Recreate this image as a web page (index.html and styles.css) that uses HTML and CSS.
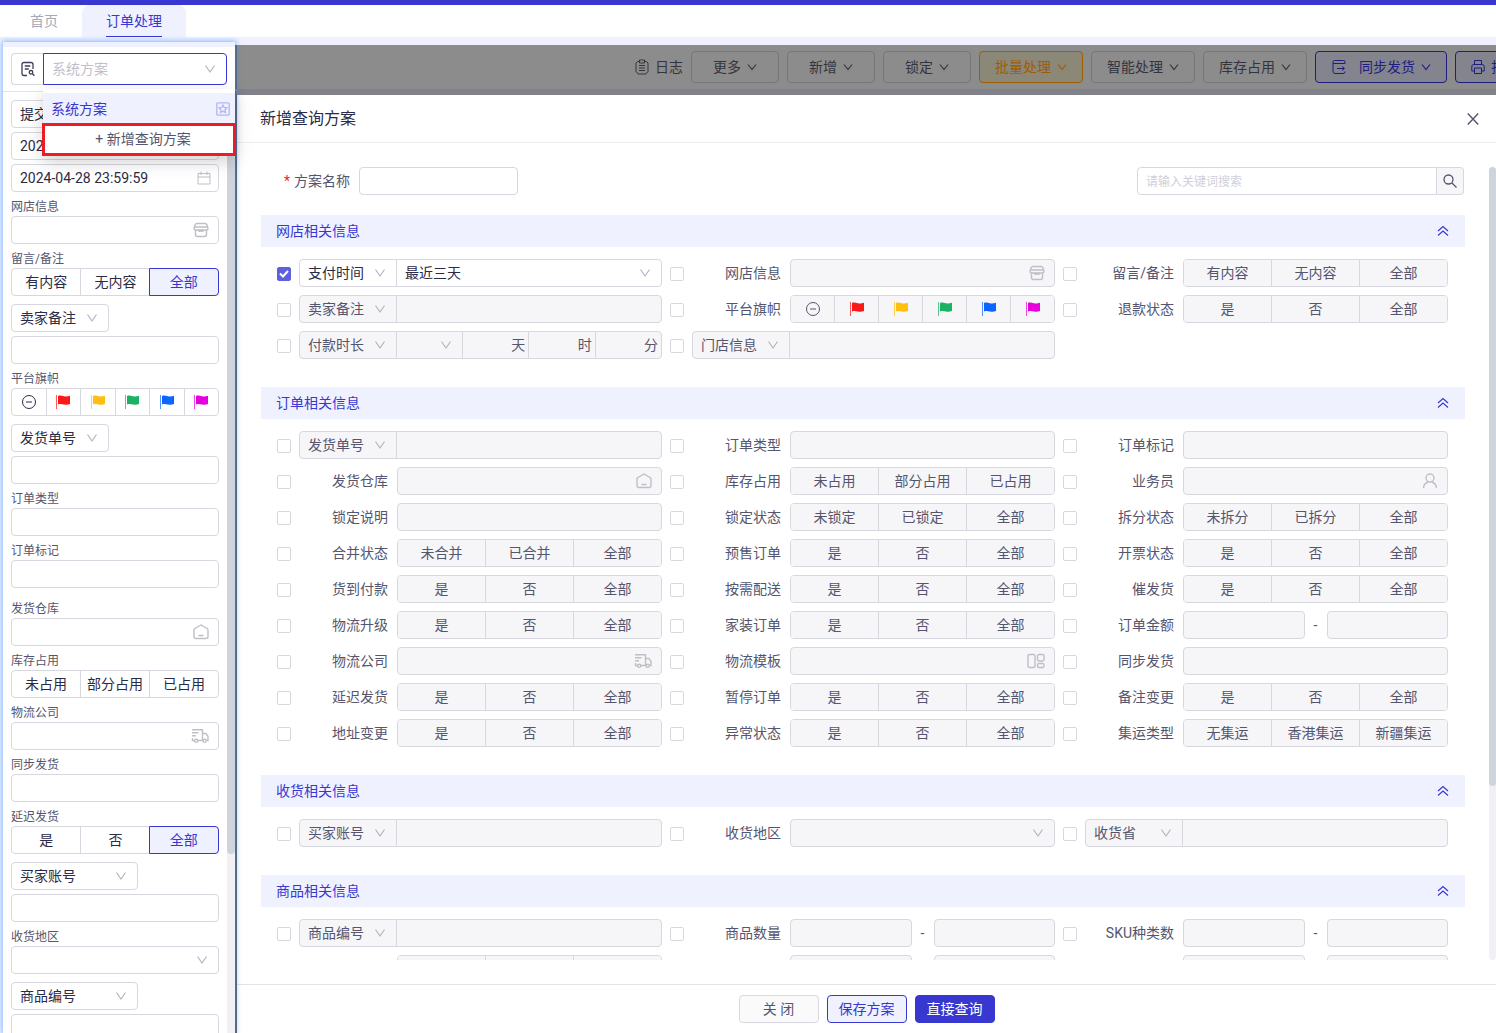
FILE: index.html
```html
<!DOCTYPE html>
<html lang="zh-CN">
<head>
<meta charset="utf-8">
<meta name="viewport" content="width=device-width, initial-scale=1">
<title>订单处理</title>
<link rel="stylesheet" href="styles.css">
</head>
<body>
<svg class="sprite" aria-hidden="true">
  <symbol id="i-down" viewBox="0 0 10 10"><path d="M1 2.5l4 5 4-5"/></symbol>
  <symbol id="i-up2" viewBox="0 0 12 12"><path d="M1 6l5-4.500 5 4.500M1 10.500L6 6l5 4.500"/></symbol>
  <symbol id="i-shop" viewBox="0 0 16 16"><path d="M4 1.500h8q1.500 0 2 1.500l1 3.500q0 1.500-1.500 1.500h-11Q1 8 1 6.500L2 3q.5-1.500 2-1.500zM2.500 8v4.500q0 2 2 2h7q2 0 2-2V8M1.800 5h12.400M5.500 8.500q1 1.500 2.500 0 1.500 1.500 2.500 0"/></symbol>
  <symbol id="i-house" viewBox="0 0 16 16"><path d="M1 6q0-1 1-1.500L8 1l6 3.500q1 .5 1 1.500v6.500q0 2-2 2H3q-2 0-2-2zM5.500 11.500h5"/></symbol>
  <symbol id="i-truck" viewBox="0 0 18 16"><path d="M1 1.700h10.500v10.800M1 4.700h6.500M1 7.700h4M1.500 10v2.500h2M7 12.500h5M11.500 5.500h3.300L17 8.300v4.200h-1.500"/><circle cx="5.200" cy="12.800" r="1.600"/><circle cx="13.700" cy="12.800" r="1.600"/></symbol>
  <symbol id="i-user" viewBox="0 0 16 16"><circle cx="8" cy="5" r="4"/><path d="M1.500 15c.3-3.500 2.500-5.500 5-6M14.500 15c-.3-3.500-2.500-5.500-5-6"/></symbol>
  <symbol id="i-grid" viewBox="0 0 18 16"><rect x="1" y="1.500" width="7" height="13" rx="1.500"/><rect x="10.500" y="1.500" width="6.500" height="6.500" rx="1.500"/><rect x="10.500" y="10.500" width="6.500" height="4" rx="1.500"/></symbol>
  <symbol id="i-date" viewBox="0 0 14 14"><path d="M1 2.500h12v10.500H1zM1 6h12M4 .5v3.500M10 .5v3.500"/></symbol>
  <symbol id="i-none" viewBox="0 0 16 16"><circle cx="8" cy="8" r="6.500"/><path d="M5 8h6"/></symbol>
  <symbol id="i-flag" viewBox="0 0 16 16"><path class="pole" d="M1.500 1v14"/><path class="cloth" d="M3 2c2-1 4 0 6 .3 2 .4 4 .2 6-.6v8.300c-2 .8-4 .9-6 .4-2-.4-4-.9-6 0z"/></symbol>
  <symbol id="i-search" viewBox="0 0 14 14"><circle cx="5.500" cy="5.500" r="4.500"/><path d="M9 9l4.500 4.500"/></symbol>
  <symbol id="i-close" viewBox="0 0 12 12"><path d="M.8.5l10.400 11M11.200.5L.8 11.500"/></symbol>
  <symbol id="i-scheme" viewBox="0 0 16 16"><path d="M7 14.500H4q-2 0-2-2v-9q0-2 2-2h7q2 0 2 2V8M4.800 5h5.500M4.800 8h4"/><circle cx="11" cy="11.300" r="1.800"/><path d="M12.400 12.700l2 2"/></symbol>
  <symbol id="i-log" viewBox="0 0 14 16"><path d="M4.500 2.500H2.500L1 4v8.500L3 15h8l2-2.500V4l-1.500-1.500h-2M4.500 1h5v3h-5zM4 6.500h6M4 9h6M4 11.500h6"/></symbol>
  <symbol id="i-sync" viewBox="0 0 16 16"><path d="M14 4.500V3q0-1.500-1.500-1.500h-9Q2 1.500 2 3v1.500h12M2 4.500v7.500q0 2.500 2 2.500h8q2 0 2-2M6 9.500h7M11 7.500l2.500 2L11 11.500"/></symbol>
  <symbol id="i-print" viewBox="0 0 14 14"><path d="M3.500 4.500v-4h7v4M3 11H.8V6.500q0-2 2-2h8.400q2 0 2 2V11H11M3.500 8h7v5.500h-7z"/></symbol>
  <symbol id="i-star" viewBox="0 0 14 14"><rect x=".8" y=".8" width="12.400" height="12.400" rx="1"/><path d="M7 3l1.200 2.500 2.800.4-2 1.900.5 2.700L7 9.200l-2.500 1.300.5-2.700-2-1.900 2.800-.4z"/></symbol>
</svg>

<header class="topbar">
  <nav class="tabs">
    <a class="tab" href="#home">首页</a>
    <a class="tab active" href="#orders"><span>订单处理</span></a>
  </nav>
</header>

<main class="workspace">
  <aside class="sidebar">
    <div class="scheme-bar">
      <button class="scheme-btn" type="button" aria-label="查询方案"><svg class="ic16"><use href="#i-scheme"/></svg></button>
      <div class="scheme-pick">
        <select class="input select placeholder" aria-label="系统方案"><option>系统方案</option></select>
        <div class="menu">
          <button type="button" class="menu-item">系统方案<svg class="ic14"><use href="#i-star"/></svg></button>
          <button type="button" class="menu-add">+ 新增查询方案</button>
        </div>
      </div>
    </div>
    <div class="side-main">
      <form class="filters">
        <div class="stack">
          <select class="input select" aria-label="时间类型"><option>提交时间</option></select>
          <input class="input" aria-label="开始时间" value="2024-04-26 00:00:00">
          <div class="with-icon"><input class="input" aria-label="结束时间" value="2024-04-28 23:59:59"><svg class="ic14"><use href="#i-date"/></svg></div>
        </div>
        <div class="group">
          <label for="s1">网店信息</label>
          <div class="with-icon"><input class="input" id="s1"><svg class="ic16"><use href="#i-shop"/></svg></div>
        </div>
        <div class="group">
          <label>留言/备注</label>
          <div class="seg"><button type="button">有内容</button><button type="button">无内容</button><button type="button" class="on">全部</button></div>
        </div>
        <div class="stack">
          <select class="input select narrow" aria-label="备注类型"><option>卖家备注</option></select>
          <input class="input" aria-label="卖家备注">
        </div>
        <div class="group">
          <label>平台旗帜</label>
          <div class="seg flags"><button type="button" aria-label="无"><svg class="ic16"><use href="#i-none"/></svg></button><button type="button" aria-label="红"><svg class="flag red"><use href="#i-flag"/></svg></button><button type="button" aria-label="黄"><svg class="flag yellow"><use href="#i-flag"/></svg></button><button type="button" aria-label="绿"><svg class="flag green"><use href="#i-flag"/></svg></button><button type="button" aria-label="蓝"><svg class="flag blue"><use href="#i-flag"/></svg></button><button type="button" aria-label="紫"><svg class="flag pink"><use href="#i-flag"/></svg></button></div>
        </div>
        <div class="stack">
          <select class="input select narrow" aria-label="单号类型"><option>发货单号</option></select>
          <input class="input" aria-label="发货单号">
        </div>
        <div class="group"><label for="s2">订单类型</label><input class="input" id="s2"></div>
        <div class="group"><label for="s3">订单标记</label><input class="input" id="s3"></div>
        <div class="group apart">
          <label for="s4">发货仓库</label>
          <div class="with-icon"><input class="input" id="s4"><svg class="ic16"><use href="#i-house"/></svg></div>
        </div>
        <div class="group">
          <label>库存占用</label>
          <div class="seg"><button type="button">未占用</button><button type="button">部分占用</button><button type="button">已占用</button></div>
        </div>
        <div class="group">
          <label for="s5">物流公司</label>
          <div class="with-icon"><input class="input" id="s5"><svg class="ic18"><use href="#i-truck"/></svg></div>
        </div>
        <div class="group"><label for="s6">同步发货</label><input class="input" id="s6"></div>
        <div class="group">
          <label>延迟发货</label>
          <div class="seg"><button type="button">是</button><button type="button">否</button><button type="button" class="on">全部</button></div>
        </div>
        <div class="stack">
          <select class="input select medium" aria-label="买家类型"><option>买家账号</option></select>
          <input class="input" aria-label="买家账号">
        </div>
        <div class="group"><label for="s7">收货地区</label><select class="input select" id="s7"></select></div>
        <div class="stack">
          <select class="input select medium" aria-label="商品类型"><option>商品编号</option></select>
          <input class="input" aria-label="商品编号">
        </div>
      </form>
      <div class="side-track"><div class="side-thumb"></div></div>
    </div>
  </aside>

  <section class="content">
    <div class="toolbar">
      <button type="button" class="log"><svg class="log-ic"><use href="#i-log"/></svg>日志</button>
      <button type="button" class="tool short">更多<svg class="ic10"><use href="#i-down"/></svg></button>
      <button type="button" class="tool short">新增<svg class="ic10"><use href="#i-down"/></svg></button>
      <button type="button" class="tool short">锁定<svg class="ic10"><use href="#i-down"/></svg></button>
      <button type="button" class="tool warn">批量处理<svg class="ic10"><use href="#i-down"/></svg></button>
      <button type="button" class="tool">智能处理<svg class="ic10"><use href="#i-down"/></svg></button>
      <button type="button" class="tool">库存占用<svg class="ic10"><use href="#i-down"/></svg></button>
      <button type="button" class="tool main"><svg class="ic16 lead"><use href="#i-sync"/></svg>同步发货<svg class="ic10"><use href="#i-down"/></svg></button>
      <button type="button" class="tool main"><svg class="ic14"><use href="#i-print"/></svg>打印<svg class="ic10"><use href="#i-down"/></svg></button>
    </div>

    <div class="drawer">
      <div class="drawer-head">
        <h1>新增查询方案</h1>
        <button type="button" class="close" aria-label="关闭"><svg class="ic12"><use href="#i-close"/></svg></button>
      </div>
      <div class="drawer-body">
        <div class="scroller">
          <div class="name-row">
            <label for="plan"><b>*</b>方案名称</label>
            <input class="input plan" id="plan">
            <div class="search">
              <input class="input" placeholder="请输入关键词搜索" aria-label="搜索">
              <button type="button" aria-label="搜索"><svg class="ic14"><use href="#i-search"/></svg></button>
            </div>
          </div>

          <section class="block">
            <h2>网店相关信息<svg class="ic12"><use href="#i-up2"/></svg></h2>
            <div class="grid">
              <div class="item"><input type="checkbox" aria-label="支付时间" checked><div class="join"><select class="input select" aria-label="时间类型"><option>支付时间</option></select><select class="input select" aria-label="时间范围"><option>最近三天</option></select></div></div>
              <div class="item"><input type="checkbox" id="a2"><label for="a2">网店信息</label><div class="with-icon"><input class="input" aria-label="网店信息" disabled><svg class="ic16"><use href="#i-shop"/></svg></div></div>
              <div class="item"><input type="checkbox" id="a3"><label for="a3">留言/备注</label><div class="seg"><button disabled>有内容</button><button disabled>无内容</button><button disabled>全部</button></div></div>

              <div class="item"><input type="checkbox" aria-label="卖家备注"><div class="join"><select class="input select" aria-label="备注类型" disabled><option>卖家备注</option></select><input class="input" aria-label="备注内容" disabled></div></div>
              <div class="item"><input type="checkbox" id="a5"><label for="a5">平台旗帜</label><div class="seg flags"><button disabled aria-label="无"><svg class="ic16"><use href="#i-none"/></svg></button><button disabled aria-label="红"><svg class="flag red"><use href="#i-flag"/></svg></button><button disabled aria-label="黄"><svg class="flag yellow"><use href="#i-flag"/></svg></button><button disabled aria-label="绿"><svg class="flag green"><use href="#i-flag"/></svg></button><button disabled aria-label="蓝"><svg class="flag blue"><use href="#i-flag"/></svg></button><button disabled aria-label="紫"><svg class="flag pink"><use href="#i-flag"/></svg></button></div></div>
              <div class="item"><input type="checkbox" id="a6"><label for="a6">退款状态</label><div class="seg"><button disabled>是</button><button disabled>否</button><button disabled>全部</button></div></div>

              <div class="item"><input type="checkbox" aria-label="付款时长"><div class="join"><select class="input select" aria-label="时长类型" disabled><option>付款时长</option></select><select class="input select compare" aria-label="比较" disabled></select><span class="unit"><input class="input" aria-label="天" disabled><i>天</i></span><span class="unit"><input class="input" aria-label="时" disabled><i>时</i></span><span class="unit"><input class="input" aria-label="分" disabled><i>分</i></span></div></div>
              <div class="item"><input type="checkbox" aria-label="门店信息"><div class="join"><select class="input select" aria-label="门店类型" disabled><option>门店信息</option></select><input class="input" aria-label="门店内容" disabled></div></div>
            </div>
          </section>

          <section class="block">
            <h2>订单相关信息<svg class="ic12"><use href="#i-up2"/></svg></h2>
            <div class="grid">
              <div class="item"><input type="checkbox" aria-label="发货单号"><div class="join"><select class="input select" aria-label="单号类型" disabled><option>发货单号</option></select><input class="input" aria-label="单号" disabled></div></div>
              <div class="item"><input type="checkbox" id="b2"><label for="b2">订单类型</label><input class="input" aria-label="订单类型" disabled></div>
              <div class="item"><input type="checkbox" id="b3"><label for="b3">订单标记</label><input class="input" aria-label="订单标记" disabled></div>

              <div class="item"><input type="checkbox" id="b4"><label for="b4">发货仓库</label><div class="with-icon"><input class="input" aria-label="发货仓库" disabled><svg class="ic16"><use href="#i-house"/></svg></div></div>
              <div class="item"><input type="checkbox" id="b5"><label for="b5">库存占用</label><div class="seg"><button disabled>未占用</button><button disabled>部分占用</button><button disabled>已占用</button></div></div>
              <div class="item"><input type="checkbox" id="b6"><label for="b6">业务员</label><div class="with-icon"><input class="input" aria-label="业务员" disabled><svg class="ic16"><use href="#i-user"/></svg></div></div>

              <div class="item"><input type="checkbox" id="b7"><label for="b7">锁定说明</label><input class="input" aria-label="锁定说明" disabled></div>
              <div class="item"><input type="checkbox" id="b8"><label for="b8">锁定状态</label><div class="seg"><button disabled>未锁定</button><button disabled>已锁定</button><button disabled>全部</button></div></div>
              <div class="item"><input type="checkbox" id="b9"><label for="b9">拆分状态</label><div class="seg"><button disabled>未拆分</button><button disabled>已拆分</button><button disabled>全部</button></div></div>

              <div class="item"><input type="checkbox" id="b10"><label for="b10">合并状态</label><div class="seg"><button disabled>未合并</button><button disabled>已合并</button><button disabled>全部</button></div></div>
              <div class="item"><input type="checkbox" id="b11"><label for="b11">预售订单</label><div class="seg"><button disabled>是</button><button disabled>否</button><button disabled>全部</button></div></div>
              <div class="item"><input type="checkbox" id="b12"><label for="b12">开票状态</label><div class="seg"><button disabled>是</button><button disabled>否</button><button disabled>全部</button></div></div>

              <div class="item"><input type="checkbox" id="b13"><label for="b13">货到付款</label><div class="seg"><button disabled>是</button><button disabled>否</button><button disabled>全部</button></div></div>
              <div class="item"><input type="checkbox" id="b14"><label for="b14">按需配送</label><div class="seg"><button disabled>是</button><button disabled>否</button><button disabled>全部</button></div></div>
              <div class="item"><input type="checkbox" id="b15"><label for="b15">催发货</label><div class="seg"><button disabled>是</button><button disabled>否</button><button disabled>全部</button></div></div>

              <div class="item"><input type="checkbox" id="b16"><label for="b16">物流升级</label><div class="seg"><button disabled>是</button><button disabled>否</button><button disabled>全部</button></div></div>
              <div class="item"><input type="checkbox" id="b17"><label for="b17">家装订单</label><div class="seg"><button disabled>是</button><button disabled>否</button><button disabled>全部</button></div></div>
              <div class="item"><input type="checkbox" id="b18"><label for="b18">订单金额</label><div class="range"><input class="input" aria-label="最低金额" disabled><span>-</span><input class="input" aria-label="最高金额" disabled></div></div>

              <div class="item"><input type="checkbox" id="b19"><label for="b19">物流公司</label><div class="with-icon"><input class="input" aria-label="物流公司" disabled><svg class="ic18"><use href="#i-truck"/></svg></div></div>
              <div class="item"><input type="checkbox" id="b20"><label for="b20">物流模板</label><div class="with-icon"><input class="input" aria-label="物流模板" disabled><svg class="ic18"><use href="#i-grid"/></svg></div></div>
              <div class="item"><input type="checkbox" id="b21"><label for="b21">同步发货</label><input class="input" aria-label="同步发货" disabled></div>

              <div class="item"><input type="checkbox" id="b22"><label for="b22">延迟发货</label><div class="seg"><button disabled>是</button><button disabled>否</button><button disabled>全部</button></div></div>
              <div class="item"><input type="checkbox" id="b23"><label for="b23">暂停订单</label><div class="seg"><button disabled>是</button><button disabled>否</button><button disabled>全部</button></div></div>
              <div class="item"><input type="checkbox" id="b24"><label for="b24">备注变更</label><div class="seg"><button disabled>是</button><button disabled>否</button><button disabled>全部</button></div></div>

              <div class="item"><input type="checkbox" id="b25"><label for="b25">地址变更</label><div class="seg"><button disabled>是</button><button disabled>否</button><button disabled>全部</button></div></div>
              <div class="item"><input type="checkbox" id="b26"><label for="b26">异常状态</label><div class="seg"><button disabled>是</button><button disabled>否</button><button disabled>全部</button></div></div>
              <div class="item"><input type="checkbox" id="b27"><label for="b27">集运类型</label><div class="seg"><button disabled>无集运</button><button disabled>香港集运</button><button disabled>新疆集运</button></div></div>
            </div>
          </section>

          <section class="block">
            <h2>收货相关信息<svg class="ic12"><use href="#i-up2"/></svg></h2>
            <div class="grid">
              <div class="item"><input type="checkbox" aria-label="买家账号"><div class="join"><select class="input select" aria-label="买家类型" disabled><option>买家账号</option></select><input class="input" aria-label="买家" disabled></div></div>
              <div class="item"><input type="checkbox" id="c2"><label for="c2">收货地区</label><select class="input select" aria-label="收货地区" disabled></select></div>
              <div class="item"><input type="checkbox" aria-label="收货省"><div class="join"><select class="input select" aria-label="地址类型" disabled><option>收货省</option></select><input class="input" aria-label="地址" disabled></div></div>
            </div>
          </section>

          <section class="block">
            <h2>商品相关信息<svg class="ic12"><use href="#i-up2"/></svg></h2>
            <div class="grid">
              <div class="item"><input type="checkbox" aria-label="商品编号"><div class="join"><select class="input select" aria-label="商品类型" disabled><option>商品编号</option></select><input class="input" aria-label="编号" disabled></div></div>
              <div class="item"><input type="checkbox" id="d2"><label for="d2">商品数量</label><div class="range"><input class="input" aria-label="最少数量" disabled><span>-</span><input class="input" aria-label="最多数量" disabled></div></div>
              <div class="item"><input type="checkbox" id="d3"><label for="d3">SKU种类数</label><div class="range"><input class="input" aria-label="最少种类" disabled><span>-</span><input class="input" aria-label="最多种类" disabled></div></div>

              <div class="item"><input type="checkbox" id="d4"><label for="d4"></label><div class="seg"><button disabled></button><button disabled></button><button disabled></button></div></div>
              <div class="item"><input type="checkbox" id="d5"><label for="d5"></label><div class="range"><input class="input" aria-label="下限" disabled><span></span><input class="input" aria-label="上限" disabled></div></div>
              <div class="item"><input type="checkbox" id="d6"><label for="d6"></label><div class="range"><input class="input" aria-label="下限" disabled><span></span><input class="input" aria-label="上限" disabled></div></div>
            </div>
          </section>
        </div>
        <div class="track"><div class="thumb"></div></div>
      </div>
      <footer class="drawer-foot">
        <button type="button" class="btn ghost">关 闭</button>
        <button type="button" class="btn outline">保存方案</button>
        <button type="button" class="btn solid">直接查询</button>
      </footer>
    </div>
  </section>
</main>
</body>
</html>
```

FILE: styles.css
```css
:root {
  --primary: #3838d1;
  --tint: #eff1ff;
  --line: #d7d7e0;
  --text: #2b2b45;
  --muted: #55556e;
  --off: #f6f6f9;
}
* { box-sizing: border-box; }
body {
  margin: 0;
  height: 100vh;
  display: flex;
  flex-direction: column;
  overflow: hidden;
  background: var(--tint);
  color: var(--text);
  font: 14px/20px Roboto, "Noto Sans CJK SC", sans-serif;
}
button, input, select { font: inherit; color: inherit; margin: 0; }
button { background: none; border: 0; padding: 0; cursor: pointer; }
h1, h2 { margin: 0; font-weight: 400; }
.sprite { position: absolute; width: 0; height: 0; }
svg { fill: none; stroke: currentColor; flex: none; display: block; }
.ic10 { width: 10px; height: 10px; }
.ic12 { width: 12px; height: 12px; }
.ic14 { width: 14px; height: 14px; }
.ic16 { width: 16px; height: 16px; }
.ic18 { width: 18px; height: 16px; }

/* header */
.topbar { border-top: 5px solid var(--primary); background: #fff; flex: none; }
.tabs { display: flex; height: 32px; padding-left: 6px; }
.tab { padding: 0 24px; line-height: 32px; color: #a5a9b8; text-decoration: none; }
.tab.active { background: var(--tint); color: var(--primary); border-radius: 8px 8px 0 0; }
.tab.active span { display: block; border-bottom: 1px solid var(--primary); height: 32px; }

.workspace { flex: 1; min-height: 0; display: flex; padding: 5px 0 0 3px; }

/* sidebar */
.sidebar {
  position: relative;
  z-index: 2;
  flex: none;
  width: 232px;
  display: flex;
  flex-direction: column;
  background: #fff;
  border-top: 5px solid var(--tint);
  box-shadow: 0 0 5px 1px rgba(60, 145, 255, .6);
}
.scheme-bar { display: flex; padding: 6px 8px; border-bottom: 1px solid #e4e4ea; flex: none; }
.scheme-btn {
  display: flex;
  align-items: center;
  justify-content: center;
  width: 32px;
  height: 32px;
  border: 1px solid var(--line);
  border-right: 0;
  border-radius: 4px 0 0 4px;
  color: #3f3f58;
}
.scheme-btn svg { stroke-width: 1.3; }
.scheme-pick { position: relative; flex: 1; }
.scheme-pick .input { height: 32px; border-color: var(--primary); border-radius: 0 4px 4px 0; }
.placeholder { color: #bfbfc8; }
.menu {
  position: absolute;
  z-index: 3;
  top: 36px;
  left: 0;
  width: 192px;
  padding-top: 4px;
  background: #fff;
  box-shadow: 0 6px 16px rgba(0, 0, 0, .18);
}
.menu-item {
  display: flex;
  width: 100%;
  height: 32px;
  padding: 0 5px 0 8px;
  align-items: center;
  justify-content: space-between;
  background: var(--tint);
  color: var(--primary);
}
.menu-item svg { color: #b4b6f2; stroke-width: 1.3; }
.menu-add {
  display: block;
  width: 194px;
  height: 33px;
  margin: -2px -1px 0;
  padding: 0 0 2px 8px;
  border: 3px solid #ed1c24;
  background: #fff;
  color: var(--muted);
}
.side-main { flex: 1; min-height: 0; display: flex; justify-content: space-between; overflow: hidden; }
.filters { flex: 1; padding: 8px 8px 0; }
.side-track { width: 8px; background: #f0f0f5; }
.side-thumb { height: 81%; background: #cdd4dc; border-radius: 4px; }
.stack { display: flex; flex-direction: column; gap: 4px; margin-top: 8px; }
.stack:first-child { margin-top: 0; }
.group { padding-top: 6px; }
.group.apart { padding-top: 12px; }
.group label { display: block; font-size: 12px; line-height: 18px; color: var(--muted); }

/* controls */
.input {
  display: block;
  width: 100%;
  min-width: 0;
  height: 28px;
  padding: 0 8px;
  border: 1px solid var(--line);
  border-radius: 4px;
  background-color: #fff;
  outline: 0;
}
.input::placeholder { color: #cfcfda; opacity: 1; font-size: 12px; }
.select {
  appearance: none;
  background-image: url("data:image/svg+xml,%3Csvg xmlns='http://www.w3.org/2000/svg' viewBox='0 0 10 10' fill='none' stroke='%23b5b5bd' stroke-width='1.2'%3E%3Cpath d='M.5 1.500l4.500 6.500 4.500-6.500'/%3E%3C/svg%3E");
  background-repeat: no-repeat;
  background-position: right 11px center;
  background-size: 10px 10px;
}
.input:disabled { background-color: var(--off); color: var(--muted); opacity: 1; }
.narrow { width: 98px; }
.medium { width: 127px; }
.with-icon { position: relative; }
.with-icon svg { position: absolute; right: 10px; top: 50%; margin-top: -8px; color: #bfbfc6; stroke-width: 1.4; }
.with-icon .ic14 { right: 8px; margin-top: -7px; stroke-width: 1; }
.seg { display: flex; height: 28px; border: 1px solid var(--line); border-radius: 4px; }
.seg button {
  flex: 1 1 0;
  display: flex;
  align-items: center;
  justify-content: center;
  white-space: nowrap;
}
.seg button + button { border-left: 1px solid var(--line); }
.seg button:first-child { border-radius: 3px 0 0 3px; }
.seg button:last-child { border-radius: 0 3px 3px 0; }
.seg button.on { margin: -1px; border: 1px solid var(--primary); border-radius: 0 4px 4px 0; background: var(--tint); color: var(--primary); }
.seg button:disabled { background: var(--off); color: var(--muted); }
.flag { width: 16px; height: 16px; }
.pole { stroke-width: 1; opacity: .7; }
.cloth { fill: currentColor; stroke: none; }
.red { color: #fa1919; }
.yellow { color: #ffbf0f; }
.green { color: #1cb264; }
.blue { color: #0a66ff; }
.pink { color: #e600dc; }
.seg button:disabled .flag.red { color: #fa1919; }

/* toolbar under the mask */
.content { flex: 1; min-width: 0; display: flex; flex-direction: column; padding-top: 3px; }
.toolbar {
  display: flex;
  flex: none;
  justify-content: flex-end;
  gap: 8px;
  padding: 6px 0;
  border-left: 2px solid #5c5c62;
  background: #8c8c8c;
  color: #34343f;
  overflow: hidden;
}
.toolbar > :last-child { margin-right: -55px; }
.toolbar .ic10 { stroke-width: 1.2; }
.log { display: flex; align-items: center; gap: 6px; }
.log-ic { width: 14px; height: 16px; }
.tool {
  display: flex;
  flex: none;
  align-items: center;
  gap: 6px;
  height: 32px;
  padding: 0 15px;
  border: 1px solid #767679;
  border-radius: 4px;
}
.tool.short { padding: 0 21px; }
.tool.warn { border-color: #a05c00; background: #8c8878; color: #a05c00; }
.tool.main { border-color: #1e1e80; background: #83848d; color: #1e1e80; }
.lead { margin-right: 6px; }

/* drawer */
.drawer {
  flex: 1;
  min-height: 0;
  display: flex;
  flex-direction: column;
  border-top: 6px solid #81818a;
  border-left: 2px solid #5c5c62;
  background: #fff;
}
.drawer-head {
  display: flex;
  flex: none;
  justify-content: space-between;
  align-items: center;
  height: 48px;
  padding: 0 17px 0 23px;
  border-bottom: 1px solid #ededf1;
}
.drawer-head h1 { font-size: 16px; line-height: 24px; }
.close { color: var(--muted); }
.close svg { stroke-width: 1.4; }
.drawer-body { flex: 1; min-height: 0; display: flex; padding: 24px 0 24px 24px; }
.scroller { flex: 1; min-width: 0; padding-right: 24px; overflow: hidden; }
.name-row { display: flex; align-items: center; margin-bottom: 20px; padding-right: 1px; }
.name-row label { width: 98px; padding-right: 9px; text-align: right; color: var(--muted); }
.name-row b { margin-right: 4px; color: #f5222d; font-weight: 400; }
.input.plan { width: 159px; }
.search { display: flex; width: 327px; margin-left: auto; }
.search .input { border-radius: 4px 0 0 4px; }
.search button {
  display: flex;
  flex: none;
  align-items: center;
  justify-content: center;
  width: 27px;
  border: 1px solid var(--line);
  border-left: 0;
  border-radius: 0 4px 4px 0;
  background: var(--off);
  color: var(--muted);
}
.search svg { stroke-width: 1.3; }
.block { margin-bottom: 28px; }
.block h2 {
  display: flex;
  align-items: center;
  justify-content: space-between;
  height: 32px;
  padding: 0 16px 0 15px;
  background: var(--tint);
  color: var(--primary);
  font-size: 14px;
}
.block h2 svg { stroke-width: 1.2; }
.grid { display: grid; grid-template-columns: repeat(3, 1fr); gap: 8px 0; padding: 12px 9px 0 16px; }
.item { display: flex; align-items: center; min-width: 0; padding-right: 8px; }
.item > label { flex: none; width: 98px; padding-right: 9px; text-align: right; color: var(--muted); }
.item > :last-child { flex: 1; min-width: 0; }
.item > input[type="checkbox"] {
  appearance: none;
  flex: none;
  width: 14px;
  height: 14px;
  margin: 2px 8px 0 0;
  border: 1px solid var(--line);
  border-radius: 2px;
  background: #fff;
}
.item > input[type="checkbox"]:checked {
  border-color: #6060dc;
  background: #6060dc url("data:image/svg+xml,%3Csvg xmlns='http://www.w3.org/2000/svg' viewBox='0 0 12 12' fill='none' stroke='white' stroke-width='2'%3E%3Cpath d='M2 5.500l3 3 5-5.500'/%3E%3C/svg%3E") center / 12px 12px no-repeat;
}
.join { display: flex; }
.join > * { flex: 1 1 0; margin-left: -1px; border-radius: 0; }
.join > :first-child { flex: none; width: 98px; margin-left: 0; border-radius: 4px 0 0 4px; }
.join > :last-child, .join > :last-child .input { border-radius: 0 4px 4px 0; }
.join > .compare { flex: none; width: 67px; }
.unit { position: relative; }
.unit .input { border-radius: 0; }
.unit i { position: absolute; right: 4px; top: 4px; font-style: normal; color: var(--muted); }
.range { display: flex; align-items: center; }
.range span { flex: none; width: 22px; text-align: center; color: var(--muted); }
.track { flex: none; width: 7px; border-radius: 4px; background: #f0f0f5; }
.thumb { height: 78%; border-radius: 4px; background: #cdd4dc; }
.drawer-foot {
  display: flex;
  flex: none;
  justify-content: center;
  gap: 8px;
  padding: 10px 0;
  border-top: 1px solid #e2e2e8;
}
.btn { width: 80px; height: 28px; border: 1px solid var(--line); border-radius: 4px; color: var(--muted); }
.btn.ghost { background: #fafafb; }
.btn.outline { border-color: var(--primary); background: var(--tint); color: var(--primary); }
.btn.solid { border-color: var(--primary); background: var(--primary); color: #fff; }
```
